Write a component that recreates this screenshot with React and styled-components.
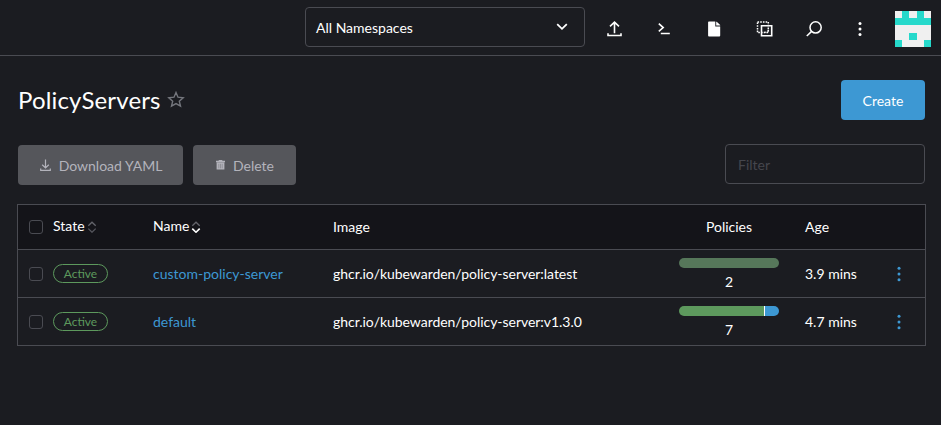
import React from "react";
import styled, { createGlobalStyle } from "styled-components";

const c = {
  bg: "#1b1c21",
  head: "#141419",
  border: "#4a4b52",
  text: "#ffffff",
  link: "#3d98d3",
  green: "#5d995d",
};

const Global = createGlobalStyle`
  * { box-sizing: border-box; }
  body { margin: 0; background: ${c.bg}; color: ${c.text}; font: 14px/20px Lato, sans-serif; }
  button, input { font: inherit; }
`;

const Page = styled.div`
  min-height: 425px;
`;

const TopBar = styled.header`
  display: flex;
  align-items: center;
  justify-content: flex-end;
  height: 56px;
  padding: 0 10px 0 0;
  border-bottom: 1px solid ${c.border};
`;

const NamespaceSelect = styled.button`
  display: flex;
  align-items: center;
  justify-content: space-between;
  width: 280px;
  height: 40px;
  margin: -1px 4px 0 0;
  padding: 2px 16px 0 10px;
  border: 1px solid ${c.border};
  border-radius: 4px;
  background: none;
  color: ${c.text};
  svg { margin-top: -3px; }
`;

const IconButton = styled.button`
  display: flex;
  align-items: center;
  justify-content: center;
  width: ${(p) => p.$width || 50}px;
  height: 55px;
  padding: 2px 0 0;
  border: 0;
  background: none;
  color: ${c.text};
`;

const Avatar = styled.svg`
  display: block;
  width: 36px;
  height: 36px;
  margin: 3px 0 0 14px;
`;

const Main = styled.main`
  padding: 24px 15px 0 17px;
`;

const TitleRow = styled.div`
  display: flex;
  align-items: center;
  justify-content: space-between;
  height: 40px;
  padding: 0 1px;
`;

const Title = styled.h1`
  display: flex;
  align-items: center;
  gap: 6px;
  margin: 0;
  font-size: 24px;
  font-weight: 400;
  line-height: 30px;
  letter-spacing: 0.15px;
`;

const Button = styled.button`
  display: inline-flex;
  align-items: center;
  justify-content: center;
  width: ${(p) => p.$width}px;
  height: 40px;
  padding: 1px 0 0;
  border: 0;
  border-radius: 4px;
  background: ${(p) => (p.$primary ? c.link : "#55565b")};
  color: ${(p) => (p.$primary ? "#ffffff" : "#b3b3bb")};
  svg { margin: -1px 8px 0 1px; }
`;

const Toolbar = styled.div`
  display: flex;
  gap: 10px;
  margin: 25px 1px 19px;
`;

const Filter = styled.input`
  width: 200px;
  height: 40px;
  margin: -1px 0 0 auto;
  padding: 0 12px;
  border: 1px solid ${c.border};
  border-radius: 4px;
  background: none;
  color: ${c.text};
  &::placeholder { color: #45464d; opacity: 1; }
`;

const Table = styled.div`
  border: 1px solid ${c.border};
`;

const Row = styled.div`
  display: grid;
  grid-template-columns: 35px 100px 180px 320px 152px 80px 1fr;
  align-items: center;
  height: ${(p) => (p.$head ? 44 : 47)}px;
  padding-bottom: ${(p) => (p.$head ? 2 : 0)}px;
  background: ${(p) => (p.$head ? c.head : "none")};
  & + & {
    height: 48px;
    border-top: 1px solid ${c.border};
  }
`;

const Cell = styled.div`
  display: flex;
  align-items: center;
  gap: 2px;
  padding-top: 1px;
  white-space: nowrap;
`;

const SortCell = styled(Cell)`
  padding: 0 0 1px;
  svg { margin-top: 2px; }
`;

const ImageCell = styled(Cell)`
  letter-spacing: -0.04px;
`;

const CenterCell = styled(Cell)`
  flex-direction: column;
  gap: 4px;
  padding-top: 2px;
`;

const Check = styled.span`
  width: 14px;
  height: 14px;
  margin: 1px 0 0 11px;
  border: 1px solid ${c.border};
  border-radius: 3px;
`;

const Badge = styled.span`
  height: 19px;
  width: 55px;
  margin-top: -1px;
  border: 1px solid ${c.green};
  border-radius: 10px;
  color: ${c.green};
  font-size: 12px;
  line-height: 18px;
  text-align: center;
`;

const Link = styled.a`
  color: ${c.link};
`;

const Bar = styled.div`
  display: flex;
  width: 100px;
  height: 10px;
  overflow: hidden;
  border-radius: 5px;
`;

const Segment = styled.span`
  flex: ${(p) => p.$value};
  background: ${(p) => p.$color};
  & + & { border-left: 1px solid #fff; }
`;

const Menu = styled.button`
  display: flex;
  margin: 1px 0 0 12px;
  padding: 0;
  border: 0;
  background: none;
  color: ${c.link};
`;

const stroke = { fill: "none", stroke: "currentColor" };

const Chevron = () => (
  <svg width="12" height="8" viewBox="0 0 12 8" {...stroke} strokeWidth="1.8">
    <path d="M1.2 1.2 6 5.8l4.8-4.6" />
  </svg>
);
const Upload = () => (
  <svg width="16" height="16" viewBox="0 0 16 16" {...stroke} strokeWidth="1.6">
    <path d="M8.5 12.2V1.4M4 5.4l4.5-4.2L13 5.4M2 12.2v2.3h13v-2.3" />
  </svg>
);
const Shell = () => (
  <svg width="14" height="14" viewBox="0 0 14 14" {...stroke} strokeWidth="1.6">
    <path d="m1.8 1.6 4.4 4-4.4 3.8M3.8 11.5h9" />
  </svg>
);
const FileIcon = () => (
  <svg width="14" height="16" viewBox="0 0 14 16" fill="currentColor">
    <path d="M1.9.5h6.4v4.9h4.9v9.2a.9.9 0 0 1-.9.9H2a.9.9 0 0 1-.9-.9V1.3A.8.8 0 0 1 1.9.5ZM9.2.7h.5l3.5 3.4v.5h-4Z" />
  </svg>
);
const CopyIcon = () => (
  <svg width="17" height="16" viewBox="0 0 17 16" {...stroke}>
    <path d="M1.5 1h10.8v10.5H1.5z" strokeWidth="1.5" strokeDasharray="1.6 1.1" />
    <path d="M5.5 4.7h10.2v10H5.5z" strokeWidth="1.6" />
    <path d="M8.5 11.2h3.7V7.5" strokeDasharray="1.5 1" />
  </svg>
);
const Search = () => (
  <svg width="16" height="16" viewBox="0 0 16 16" {...stroke} strokeWidth="1.5">
    <circle cx="9.6" cy="6.4" r="5.6" />
    <path d="M5.6 10.4.8 15" />
  </svg>
);
const Dots = ({ r = 1.5, gap = 5.6 }) => (
  <svg width="4" height="16" viewBox="0 0 4 16" fill="currentColor">
    {[-1, 0, 1].map((n) => <circle key={n} cx="2" cy={8 + n * gap} r={r} />)}
  </svg>
);
const Star = () => (
  <svg width="18" height="18" viewBox="0 0 18 18" {...stroke} stroke="#74767d" strokeWidth="1.4">
    <path d="m9 1.5 2 4.7 5.2.5-3.9 3.5 1.2 5L9 12.6l-4.5 2.6 1.2-5-3.9-3.5L7 6.2Z" />
  </svg>
);
const Download = () => (
  <svg width="11" height="13" viewBox="0 0 11 13" {...stroke} strokeWidth="1.2">
    <path d="M5.5.5v8.2M2.2 5.7l3.3 3.2 3.3-3.2M.7 9.5v1.8h9.6V9.5" />
  </svg>
);
const Trash = () => (
  <svg width="9" height="12" viewBox="0 0 9 12" fill="currentColor">
    <path d="M0 1.8h2.7V.9h3.6v.9H9v1.4H0ZM.6 3.6h7.8v7H.6Z" />
    <path d="M2.8 4.8v4.5M4.5 4.8v4.5M6.2 4.8v4.5" stroke="#66676c" strokeWidth=".45" />
  </svg>
);
const Sort = ({ down }) => (
  <svg width="10" height="12" viewBox="0 0 10 12" {...stroke} strokeWidth="1.3">
    <path d="M1.3 4.8 5 1.2l3.7 3.6" stroke="#63646b" />
    <path d="M1.3 7.6 5 11.2l3.7-3.6" stroke={down ? "#fff" : "#55565d"} strokeWidth={down ? 1.6 : 1.3} />
  </svg>
);
const Identicon = () => (
  <Avatar viewBox="0 0 5 5" shapeRendering="crispEdges">
    <path fill="#f0f0f0" d="M0 0h5v5H0z" />
    <path fill="#26d9cb" d="M1 0h1v1h1V0h1v1h1v1H0V1h1ZM2 3h1v1H2ZM0 4h1v1H0ZM4 4h1v1H4Z" />
  </Avatar>
);

const servers = [
  { name: "custom-policy-server", image: "ghcr.io/kubewarden/policy-server:latest", count: 2, age: "3.9 mins", bar: [[1, "#56775a"]] },
  { name: "default", image: "ghcr.io/kubewarden/policy-server:v1.3.0", count: 7, age: "4.7 mins", bar: [[6, c.green], [1, c.link]] },
];

export default function App() {
  return (
    <Page>
      <Global />
      <TopBar>
        <NamespaceSelect>All Namespaces<Chevron /></NamespaceSelect>
        <IconButton aria-label="Import"><Upload /></IconButton>
        <IconButton aria-label="Shell"><Shell /></IconButton>
        <IconButton aria-label="Kubeconfig"><FileIcon /></IconButton>
        <IconButton aria-label="Copy"><CopyIcon /></IconButton>
        <IconButton aria-label="Search"><Search /></IconButton>
        <IconButton aria-label="More" $width={42}><Dots /></IconButton>
        <Identicon />
      </TopBar>
      <Main>
        <TitleRow>
          <Title>PolicyServers<Star /></Title>
          <Button $primary $width={84}>Create</Button>
        </TitleRow>
        <Toolbar>
          <Button $width={165} disabled><Download />Download YAML</Button>
          <Button $width={103} disabled><Trash />Delete</Button>
          <Filter placeholder="Filter" />
        </Toolbar>
        <Table>
          <Row $head>
            <Check />
            <SortCell>State<Sort /></SortCell>
            <SortCell>Name<Sort down /></SortCell>
            <Cell>Image</Cell>
            <CenterCell>Policies</CenterCell>
            <Cell>Age</Cell>
          </Row>
          {servers.map((s) => (
            <Row key={s.name}>
              <Check />
              <Cell><Badge>Active</Badge></Cell>
              <Cell><Link>{s.name}</Link></Cell>
              <ImageCell>{s.image}</ImageCell>
              <CenterCell>
                <Bar>{s.bar.map(([v, color]) => <Segment key={color} $value={v} $color={color} />)}</Bar>
                {s.count}
              </CenterCell>
              <Cell>{s.age}</Cell>
              <Menu aria-label="Actions"><Dots r={1.5} gap={5.7} /></Menu>
            </Row>
          ))}
        </Table>
      </Main>
    </Page>
  );
}
